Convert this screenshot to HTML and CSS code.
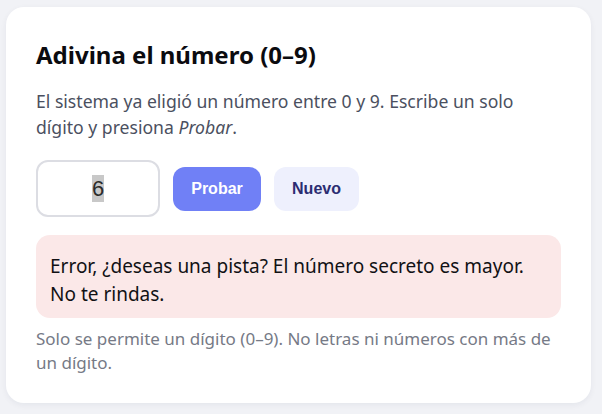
FILE: index.html
```html
<!DOCTYPE html>
<html lang="es">
<head>
<meta charset="utf-8">
<title>Adivina el número</title>
<link rel="stylesheet" href="styles.css">
</head>
<body>
<main class="card">
  <h1 class="title">Adivina el número (0–9)</h1>
  <p class="intro">El sistema ya eligió un número entre 0 y 9. Escribe un solo dígito y presiona <em>Probar</em>.</p>
  <div class="controls">
    <div class="field"><span class="sel">6</span></div>
    <button class="btn btn-primary" type="button">Probar</button>
    <button class="btn btn-secondary" type="button">Nuevo</button>
  </div>
  <div class="alert">Error, ¿deseas una pista? El número secreto es mayor. No te rindas.</div>
  <p class="hint">Solo se permite un dígito (0–9). No letras ni números con más de un dígito.</p>
</main>
</body>
</html>
```
FILE: styles.css
```css
html, body {
  margin: 0;
  padding: 0;
  background: #f1f2f6;
}
body {
  padding: 7px 11px 11px 6px;
  font-family: "Noto Sans", "Open Sans", sans-serif;
}
.card {
  background: #ffffff;
  border-radius: 18px;
  box-shadow: 0 2px 6px rgba(20, 30, 60, 0.06);
  padding: 30px 30px 28px 30px;
  height: 396px;
  box-sizing: border-box;
}
.title {
  margin: 0;
  font-size: 24px;
  line-height: 36px;
  font-weight: 700;
  color: #0b0b0f;
}
.intro {
  margin: 15px 0 0;
  font-size: 17.6px;
  line-height: 26px;
  color: #4b5060;
}
.controls {
  display: flex;
  align-items: center;
  gap: 13px;
  margin-top: 20px;
}
.field {
  width: 124px;
  height: 57px;
  box-sizing: border-box;
  border: 2px solid #dcdde3;
  border-radius: 12px;
  display: flex;
  align-items: center;
  justify-content: center;
  font-family: "Liberation Sans", Arial, sans-serif;
  font-size: 22px;
  color: #2b2b2b;
}
.sel {
  background: #c8c8c8;
  line-height: 27px;
}
.btn {
  height: 44px;
  border: 0;
  border-radius: 12px;
  font-family: "Liberation Sans", Arial, sans-serif;
  font-weight: 700;
  font-size: 16px;
  padding: 0;
}
.btn-primary {
  background: #7080f6;
  color: #ffffff;
  width: 88px;
}
.btn-secondary {
  background: #eef0fd;
  color: #2b2d72;
  width: 85px;
}
.alert {
  margin-top: 18px;
  background: #fbe8e8;
  border-radius: 14px;
  padding: 17px 22px 10px 14px;
  font-size: 19px;
  line-height: 28px;
  color: #111114;
}
.hint {
  margin: 9px 0 0;
  font-size: 17px;
  line-height: 24px;
  color: #767a86;
}
```
